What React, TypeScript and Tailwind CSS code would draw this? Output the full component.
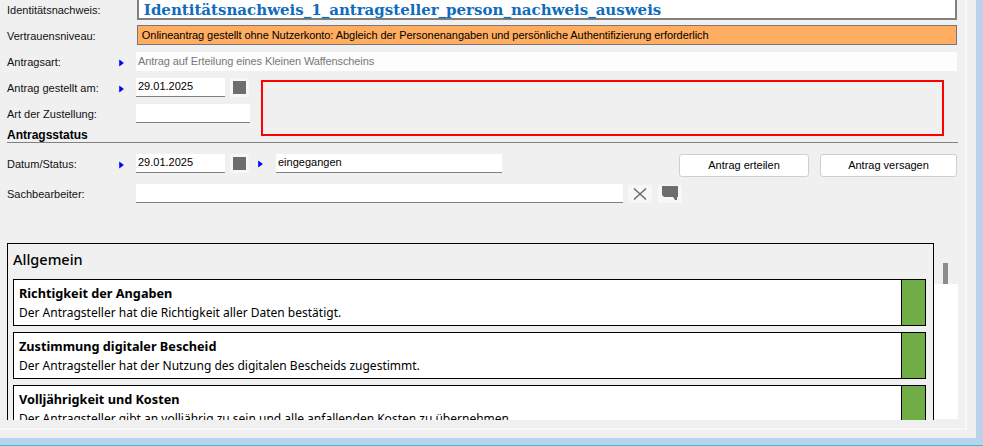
import React from 'react';

const Arrow = () => (
  <svg width="5" height="8" viewBox="0 0 5 8" className="shrink-0" aria-hidden="true">
    <path d="M0.5 1 L4.5 4 L0.5 7 Z" fill="#0000ff" stroke="#0000ff" strokeWidth="0.6" />
  </svg>
);

const Field = ({ className, children }: { className: string; children?: React.ReactNode }) => (
  <div className={`h-[19px] bg-white border-b border-[#808080] pl-[2px] text-[11px] leading-[17px] text-black ${className}`}>
    {children}
  </div>
);

const SquareButton = () => (
  <div className="w-[19px] h-[19px] rounded-[2px] bg-[#f7f7f7] flex items-center justify-center">
    <div className="w-[13px] h-[13px] bg-[#6d6d6d]" />
  </div>
);

const Label = ({ children }: { children: React.ReactNode }) => (
  <div className="w-[112px] text-[11px] leading-[19px] pt-px text-[#111]">{children}</div>
);

const ArrowSlot = () => (
  <div className="w-[17px] h-[19px] flex items-center pt-[3px]">
    <Arrow />
  </div>
);

const Card = ({ title, text }: { title: string; text: string }) => (
  <div className="h-[47px] shrink-0 flex border border-black bg-white">
    <div className="flex-1 pl-[5px] pt-[4px]">
      <div className="font-['Noto_Sans',sans-serif] text-[12.7px] leading-[18px] font-bold text-black">{title}</div>
      <div className="font-['Noto_Sans',sans-serif] text-[12px] leading-[18px] mt-[2px] text-black">{text}</div>
    </div>
    <div className="w-[24px] border-l border-black bg-[#70ad47]" />
  </div>
);

export default function App() {
  return (
    <div className="w-[983px] h-[446px] overflow-hidden bg-[#bad2ea] border-b border-[#2fc4dc] font-['Liberation_Sans',sans-serif]">
      <div className="w-[976px] h-[438px] bg-[#f0f0f0] pr-[9px] pb-[8px]">
        <div className="w-[967px] h-[430px] border-r-2 border-b-2 border-[#f8f8f8] overflow-hidden">
          <div className="h-[420px] overflow-hidden pl-[7px] pr-[8px]">
            {/* Kopfdaten */}
            <div className="flex h-[20px]">
              <div className="w-[130px] text-[11px] leading-[20px] text-[#111]">Identitätsnachweis:</div>
              <div className="w-[821px] bg-white border-2 border-[#808080] border-t-0 pl-[5px] font-['DejaVu_Serif',serif] font-bold text-[15px] leading-[20px] text-[#0f6cbd]">
                Identitätsnachweis_1_antragsteller_person_nachweis_ausweis
              </div>
            </div>
            <div className="flex mt-[5px] h-[20px]">
              <div className="w-[130px] text-[11px] leading-[22px] text-[#111]">Vertrauensniveau:</div>
              <div className="w-[821px] bg-[#ffad60] border border-[#777] pl-[4px] text-[11px] tracking-[-0.06px] leading-[18px] text-black">
                Onlineantrag gestellt ohne Nutzerkonto: Abgleich der Personenangaben und persönliche Authentifizierung erforderlich
              </div>
            </div>
            <div className="flex mt-[7px] h-[19px]">
              <Label>Antragsart:</Label>
              <ArrowSlot />
              <div className="w-[821px] bg-[#fdfdfd] pl-[2px] text-[11px] tracking-[-0.1px] leading-[18px] text-[#777]">
                Antrag auf Erteilung eines Kleinen Waffenscheins
              </div>
            </div>

            <div className="flex mt-[7px] h-[64px]">
              <div className="w-[243px] shrink-0">
                <div className="flex items-start h-[19px]">
                  <Label>Antrag gestellt am:</Label>
                  <ArrowSlot />
                  <Field className="w-[89px]">29.01.2025</Field>
                  <div className="ml-[5px]">
                    <SquareButton />
                  </div>
                </div>
                <div className="flex mt-[7px] h-[19px]">
                  <div className="w-[129px] text-[11px] leading-[19px] pt-px text-[#111]">Art der Zustellung:</div>
                  <Field className="w-[114px]" />
                </div>
                <div className="mt-[6px] text-[12px] leading-[13px] font-bold text-black">Antragsstatus</div>
              </div>
              <div className="ml-[11px] mt-[2px] w-[683px] h-[56px] border-2 border-[#ff0000]" />
            </div>
            <div className="h-px bg-[#808080] w-[951px]" />

            {/* Status */}
            <div className="flex mt-[11px] h-[23px]">
              <Label>Datum/Status:</Label>
              <ArrowSlot />
              <Field className="w-[89px]">29.01.2025</Field>
              <div className="ml-[5px]">
                <SquareButton />
              </div>
              <div className="ml-[9px] w-[18px] flex items-start pt-[6px]">
                <Arrow />
              </div>
              <Field className="w-[226px]">eingegangen</Field>
              <button className="ml-[177px] w-[130px] h-[23px] bg-white border border-[#cfcfcf] rounded-[3px] text-[11px] text-black">
                Antrag erteilen
              </button>
              <button className="ml-[11px] w-[137px] h-[23px] bg-white border border-[#cfcfcf] rounded-[3px] text-[11px] text-black">
                Antrag versagen
              </button>
            </div>
            <div className="flex mt-[7px] h-[19px]">
              <div className="w-[129px] text-[11px] leading-[19px] pt-px text-[#111]">Sachbearbeiter:</div>
              <Field className="w-[487px]" />
              <div className="ml-[5px] mt-px w-[24px] h-[18px] rounded-[2px] bg-[#f7f7f7] flex items-center justify-center">
                <svg width="14" height="14" viewBox="0 0 14 14" aria-hidden="true">
                  <path d="M1 1.5 L13 12.5 M13 1.5 L1 12.5" stroke="#6d6d6d" strokeWidth="1.6" fill="none" />
                </svg>
              </div>
              <div className="ml-[6px] mt-px w-[24px] h-[18px] rounded-[2px] bg-[#f7f7f7] flex items-center justify-center">
                <svg width="16" height="15" viewBox="0 0 16 15" className="-mt-[2px]" aria-hidden="true">
                  <path d="M0 0 H16 V11 H15 V14 H13 L11 11 H2 L0 9 Z" fill="#6d6d6d" />
                </svg>
              </div>
            </div>

            {/* Allgemein */}
            <div className="flex mt-[40px]">
              <div className="w-[927px] h-[200px] shrink-0 border border-black border-b-0 pl-[5px] pr-[7px] flex flex-col">
                <div className="font-['Noto_Sans',sans-serif] font-medium text-[14.5px] leading-[20px] mt-[5px] mb-[10px] text-black">Allgemein</div>
                <div className="flex flex-col gap-[6px]">
                  <Card title="Richtigkeit der Angaben" text="Der Antragsteller hat die Richtigkeit aller Daten bestätigt." />
                  <Card title="Zustimmung digitaler Bescheid" text="Der Antragsteller hat der Nutzung des digitalen Bescheids zugestimmt." />
                  <Card title="Volljährigkeit und Kosten" text="Der Antragsteller gibt an volljährig zu sein und alle anfallenden Kosten zu übernehmen." />
                </div>
              </div>
              <div className="w-[24px] shrink-0 flex flex-col">
                <div className="h-[21px] pt-[20px] pl-[9px]">
                  <div className="w-[5px] h-[21px] bg-[#8c8c8c]" />
                </div>
                <div className="mt-[20px] h-[135px] bg-white" />
              </div>
            </div>
          </div>
        </div>
      </div>
    </div>
  );
}
